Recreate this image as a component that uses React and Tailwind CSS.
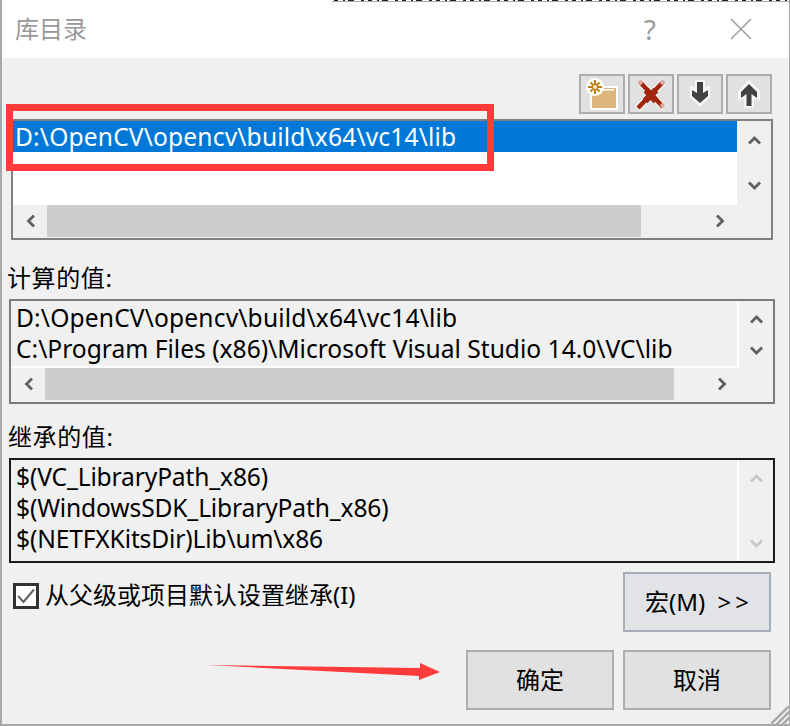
const FONT = "font-['Noto_Sans','Noto_Sans_CJK_SC',sans-serif]";

function Chevron({ dir, color = "#606060" }) {
  const rot = { up: 0, down: 180, left: 270, right: 90 }[dir];
  return (
    <svg width="13" height="10" viewBox="0 0 13 10" style={{ transform: `rotate(${rot}deg)` }}>
      <path d="M1 8.5 L6.5 3 L12 8.5" fill="none" stroke={color} strokeWidth="2.8" />
    </svg>
  );
}

function ToolButton({ children }) {
  return (
    <div className="w-[46px] h-[40px] bg-[#e1e1e1] border-2 border-[#adadad] flex items-center justify-center">
      {children}
    </div>
  );
}

function HScroll({ left, thumb, rest, color }) {
  return (
    <div className="flex h-[32px] bg-[#f0f0f0]">
      <div className="flex items-center justify-center" style={{ width: left }}>
        <Chevron dir="left" color={color} />
      </div>
      <div className="bg-[#cdcdcd]" style={{ width: thumb }} />
      <div className="flex items-center justify-end pr-[44px]" style={{ width: rest }}>
        <Chevron dir="right" color={color} />
      </div>
    </div>
  );
}

function DialogButton({ children, className = "" }) {
  return (
    <div className={`w-[148px] h-[60px] border-2 flex items-center justify-center text-[24px] text-black ${className}`}>
      {children}
    </div>
  );
}

function FolderIcon() {
  return (
    <svg width="34" height="34" viewBox="0 0 34 34">
      <rect x="5" y="9" width="28" height="24" fill="#fff" />
      <rect x="7" y="11" width="24" height="20" fill="#dcb67a" />
      <rect x="18" y="12" width="11" height="1.5" fill="#fff" />
      <circle cx="10" cy="10" r="9" fill="#fff" />
      <g stroke="#c27d1a" strokeWidth="2">
        <path d="M10 3 V17 M3 10 H17 M5.5 5.5 L14.5 14.5 M14.5 5.5 L5.5 14.5" />
      </g>
      <circle cx="10" cy="10" r="2" fill="#f5e6cc" />
    </svg>
  );
}

function RedX() {
  return (
    <svg width="34" height="34" viewBox="0 0 34 34">
      <path d="M6 5 L30 31 M30 4 L3 32" stroke="#f4f4f4" strokeWidth="7" fill="none" />
      <path d="M6 5 L29 30 M29 5 L4 31" stroke="#a1260d" strokeWidth="4.5" fill="none" />
      <path d="M12 13 L22 24 M22 13 L11 24" stroke="#a1260d" strokeWidth="6.5" fill="none" />
      <path d="M5 4 L8 7 M30 4 L27 7 M30 30 L27 27" stroke="#d9a79c" strokeWidth="4" fill="none" />
    </svg>
  );
}

function ArrowDown() {
  return (
    <svg width="26" height="30" viewBox="0 0 26 30">
      <path d="M8 1 H18 V9 L23 6 V18 L13 28 L3 18 V6 L8 9 Z" fill="#f6f6f6" />
      <path d="M10 3 H16 V14 L21 11 V17 L13 24 L5 17 V11 L10 14 Z" fill="#424242" />
    </svg>
  );
}

function ArrowUp() {
  return (
    <svg width="26" height="30" viewBox="0 0 26 30">
      <path d="M13 1 L24 12 V22 L18 19 V29 H8 V19 L2 22 V12 Z" fill="#f6f6f6" />
      <path d="M13 5 L21 13 V19 L15.5 15 V27 H10.5 V15 L5 19 V13 Z" fill="#424242" />
    </svg>
  );
}

export default function App() {
  return (
    <div className={`relative w-[790px] h-[726px] overflow-hidden bg-[#f0f0f0] border-l-2 border-r border-b-2 border-[#a8a8a8] text-black ${FONT}`}>
      <div className="h-[58px] -ml-[2px] bg-white flex items-center justify-between">
        <span className="pl-[15px] text-[24px] leading-none text-[#999999]">库目录</span>
        <div className="flex items-center">
          <span className="text-[28px] leading-none text-[#999999] mr-[74px]">?</span>
          <svg width="22" height="22" viewBox="0 0 22 22" className="mr-[37px]">
            <path d="M1 1 L21 21 M21 1 L1 21" stroke="#a0a0a0" strokeWidth="1.6" fill="none" />
          </svg>
        </div>
      </div>

      <div className="pt-[16px] pl-[577px] flex gap-[3px]">
        <ToolButton><FolderIcon /></ToolButton>
        <ToolButton><RedX /></ToolButton>
        <ToolButton><ArrowDown /></ToolButton>
        <ToolButton><ArrowUp /></ToolButton>
      </div>

      <div className="ml-[9px] mt-[5px] w-[762px] h-[121px] border-2 border-[#808080] bg-[#f0f0f0] flex flex-col">
        <div className="flex h-[84px]">
          <div className="w-[724px] bg-white">
            <div className="h-[31px] bg-[#0078d7] text-white text-[24.6px] leading-[31px] tracking-[0.15px] pl-[2px] whitespace-nowrap">
              D:\OpenCV\opencv\build\x64\vc14\lib
            </div>
          </div>
          <div className="flex-1 flex flex-col items-center justify-between py-[14px]">
            <Chevron dir="up" />
            <Chevron dir="down" />
          </div>
        </div>
        <HScroll left={34} thumb={594} rest={130} />
      </div>

      <div className="ml-[5px] mt-[23px] text-[24px] leading-[30px] tracking-[0.6px]">计算的值:</div>

      <div className="ml-[7px] mt-[6px] w-[766px] h-[105px] border-2 border-[#7a7a7a] flex flex-col">
        <div className="flex h-[67px]">
          <div className="w-[728px] border-r-2 border-b-2 border-white pl-[5px] pt-[1px] text-[24.6px] leading-[31px] whitespace-nowrap">
            <div className="tracking-[0.15px]">D:\OpenCV\opencv\build\x64\vc14\lib</div>
            <div>C:\Program Files (x86)\Microsoft Visual Studio 14.0\VC\lib</div>
          </div>
          <div className="flex-1 flex flex-col items-center justify-between pt-[13px] pb-[12px]">
            <Chevron dir="up" />
            <Chevron dir="down" />
          </div>
        </div>
        <HScroll left={34} thumb={629} rest={99} />
      </div>

      <div className="ml-[6px] mt-[18px] text-[24px] leading-[30px] tracking-[0.6px]">继承的值:</div>

      <div className="ml-[7px] mt-[6px] w-[766px] h-[105px] border-2 border-[#1a1a1a] flex">
        <div className="w-[728px] border-r-2 border-white pl-[5px] pt-[1px] text-[24.6px] leading-[31px] tracking-[-0.15px] whitespace-nowrap">
          <div>$(VC_LibraryPath_x86)</div>
          <div>$(WindowsSDK_LibraryPath_x86)</div>
          <div>$(NETFXKitsDir)Lib\um\x86</div>
        </div>
        <div className="flex-1 flex flex-col items-center justify-between pt-[13px] pb-[12px]">
          <Chevron dir="up" color="#c8c8c8" />
          <Chevron dir="down" color="#c8c8c8" />
        </div>
      </div>

      <div className="mt-[9px] pr-[18px] flex items-start justify-between">
        <div className="flex items-center ml-[11px] mt-[8px] gap-[6px]">
          <div className="w-[26px] h-[26px] bg-white border-[3px] border-[#333333] flex items-center justify-center">
            <svg width="18" height="16" viewBox="0 0 18 16">
              <path d="M1 8 L6.5 14 L17 1.5" fill="none" stroke="#606060" strokeWidth="2" />
            </svg>
          </div>
          <span className="text-[24px] leading-[30px] pb-[2px] whitespace-nowrap">从父级或项目默认设置继承(I)</span>
        </div>
        <DialogButton className="bg-[#e1e3e6] border-[#a5aeb8]">
          宏(M)&nbsp;&nbsp;&gt;&thinsp;&gt;
        </DialogButton>
      </div>

      <div className="mt-[18px] pr-[18px] flex justify-end gap-[9px]">
        <DialogButton className="bg-[#e1e1e1] border-[#adadad]">确定</DialogButton>
        <DialogButton className="bg-[#e1e1e1] border-[#adadad]">取消</DialogButton>
      </div>

      <svg width="18" height="18" viewBox="0 0 18 18" className="absolute right-0 bottom-0">
        <path d="M19 -1 L-1 19 M19 5 L5 19 M19 11 L11 19" stroke="#a8a8a8" strokeWidth="2.4" />
      </svg>

      <div className="absolute left-[4px] top-[104px] w-[488px] h-[67px] border-[7px] border-[#ff3b3b]" />

      <svg width="240" height="30" viewBox="0 0 240 30" className="absolute left-[205px] top-[653px]">
        <path d="M0 12 L213 15 L213 10 L233 19 L212 27 L212 23 Z" fill="#ff3b3b" />
      </svg>

      <svg width="457" height="2" viewBox="0 0 457 2" className="absolute right-0 top-0">
        <rect x="0" y="1" width="457" height="1" fill="#a8a8a8" />
        <path d="M2 0.5 H457" stroke="#222222" strokeWidth="1.2" strokeDasharray="4 5 2 3 6 7 3 4" />
      </svg>
    </div>
  );
}
